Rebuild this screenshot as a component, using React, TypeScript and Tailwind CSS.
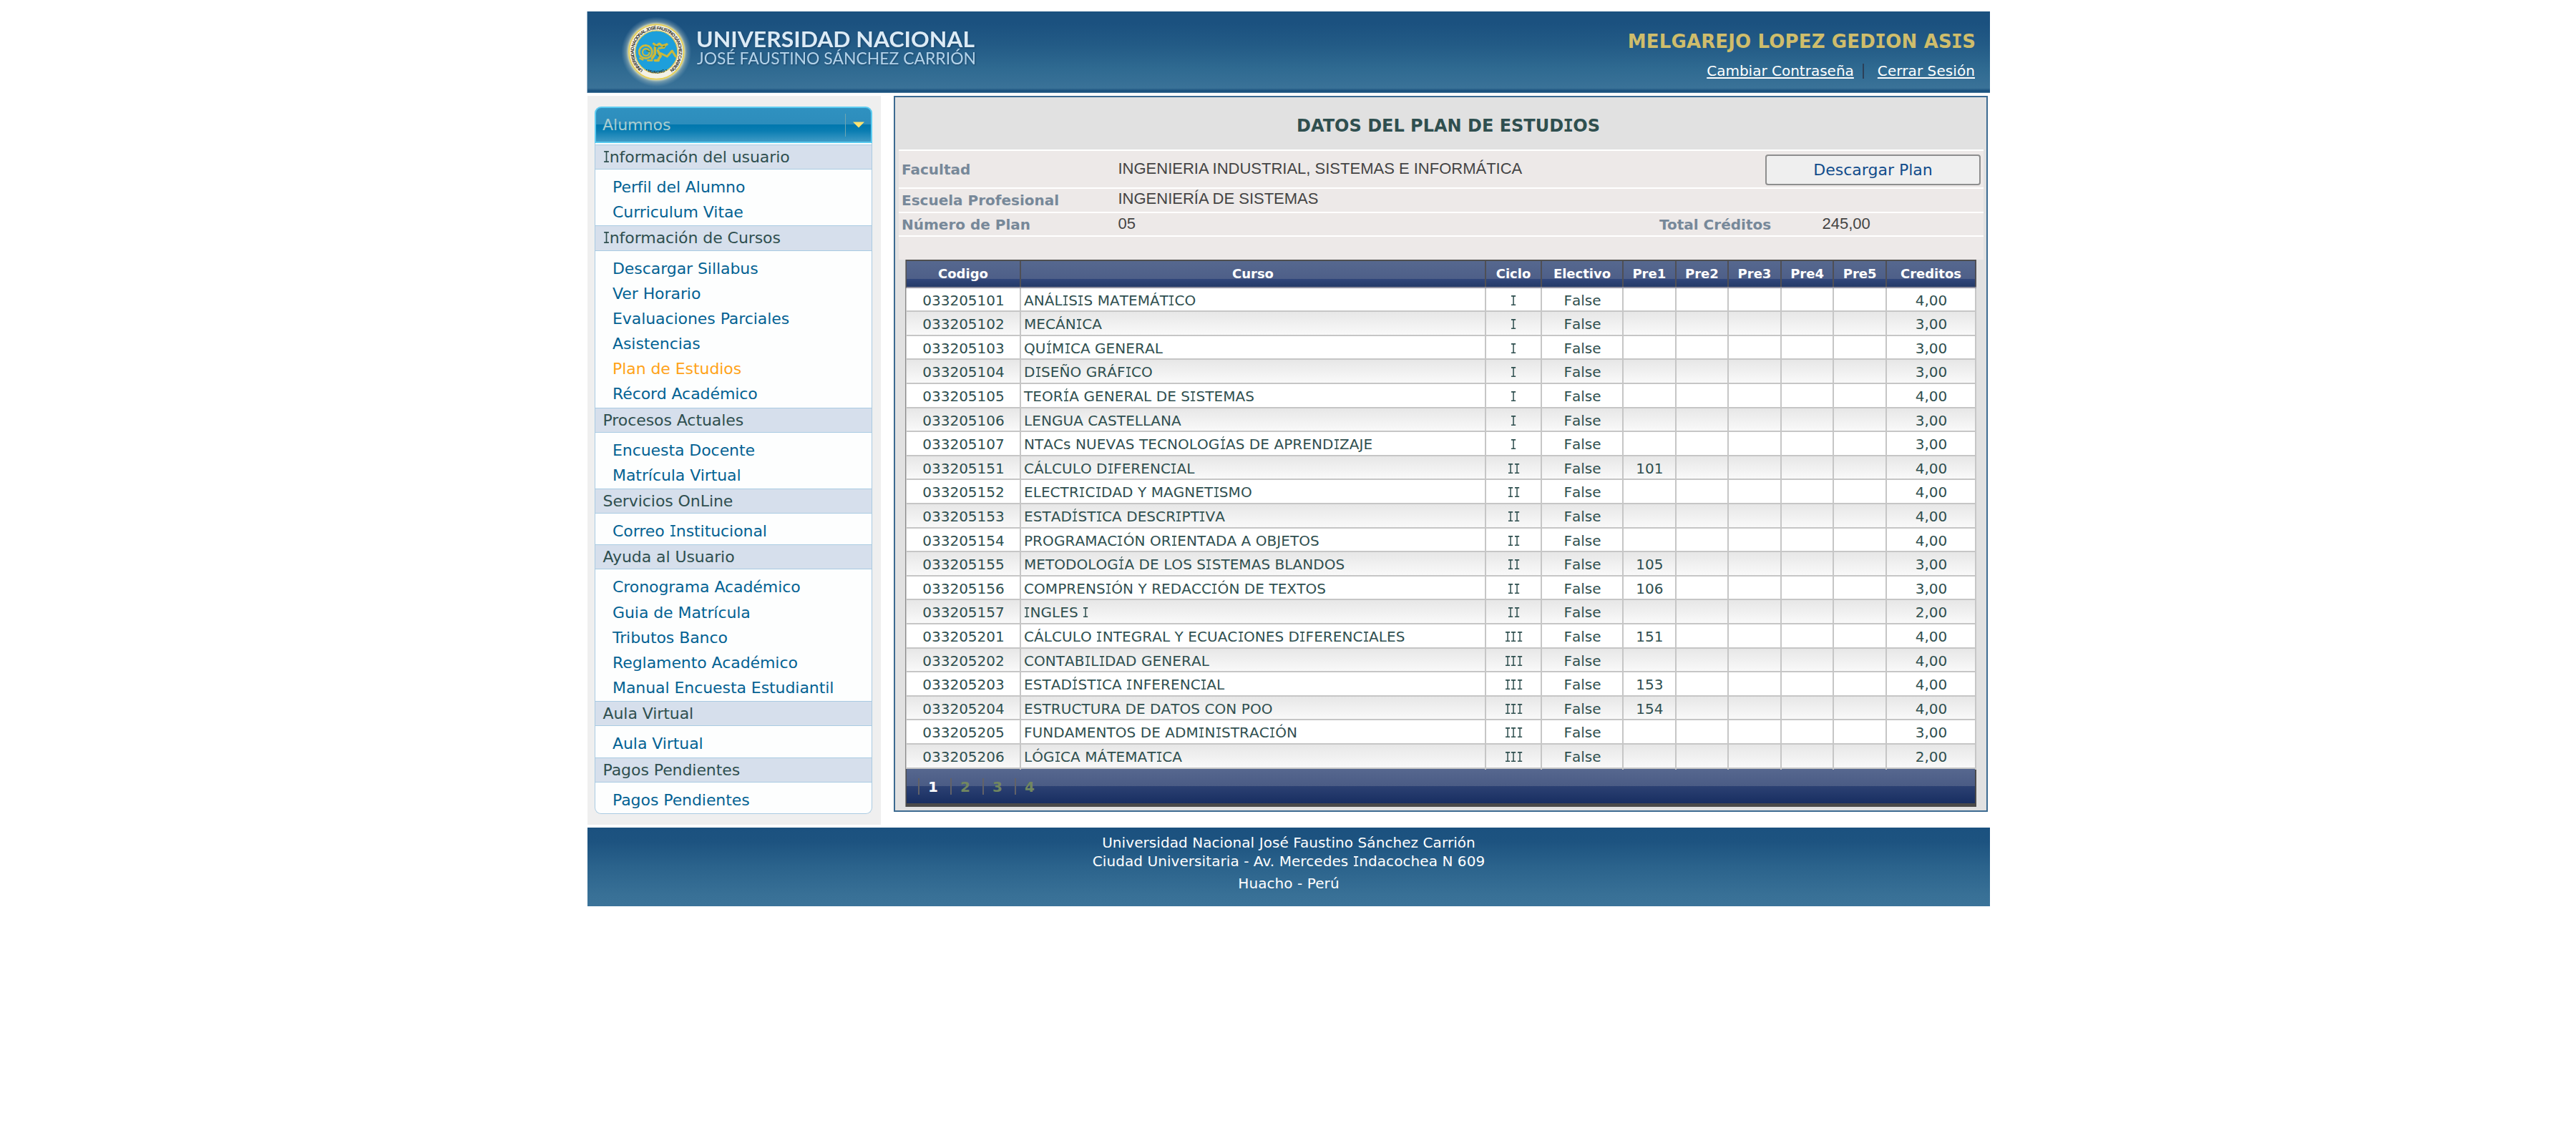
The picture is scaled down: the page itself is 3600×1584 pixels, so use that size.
import React from 'react';

const MENU: { title: string; items: string[] }[] = [
  { title: 'Información del usuario', items: ['Perfil del Alumno', 'Curriculum Vitae'] },
  {
    title: 'Información de Cursos',
    items: ['Descargar Sillabus', 'Ver Horario', 'Evaluaciones Parciales', 'Asistencias', 'Plan de Estudios', 'Récord Académico'],
  },
  { title: 'Procesos Actuales', items: ['Encuesta Docente', 'Matrícula Virtual'] },
  { title: 'Servicios OnLine', items: ['Correo Institucional'] },
  {
    title: 'Ayuda al Usuario',
    items: ['Cronograma Académico', 'Guia de Matrícula', 'Tributos Banco', 'Reglamento Académico', 'Manual Encuesta Estudiantil'],
  },
  { title: 'Aula Virtual', items: ['Aula Virtual'] },
  { title: 'Pagos Pendientes', items: ['Pagos Pendientes'] },
];

const COURSES: [string, string, string, string, string][] = [
  ['033205101', 'ANÁLISIS MATEMÁTICO', 'I', '', '4,00'],
  ['033205102', 'MECÁNICA', 'I', '', '3,00'],
  ['033205103', 'QUÍMICA GENERAL', 'I', '', '3,00'],
  ['033205104', 'DISEÑO GRÁFICO', 'I', '', '3,00'],
  ['033205105', 'TEORÍA GENERAL DE SISTEMAS', 'I', '', '4,00'],
  ['033205106', 'LENGUA CASTELLANA', 'I', '', '3,00'],
  ['033205107', 'NTACs NUEVAS TECNOLOGÍAS DE APRENDIZAJE', 'I', '', '3,00'],
  ['033205151', 'CÁLCULO DIFERENCIAL', 'II', '101', '4,00'],
  ['033205152', 'ELECTRICIDAD Y MAGNETISMO', 'II', '', '4,00'],
  ['033205153', 'ESTADÍSTICA DESCRIPTIVA', 'II', '', '4,00'],
  ['033205154', 'PROGRAMACIÓN ORIENTADA A OBJETOS', 'II', '', '4,00'],
  ['033205155', 'METODOLOGÍA DE LOS SISTEMAS BLANDOS', 'II', '105', '3,00'],
  ['033205156', 'COMPRENSIÓN Y REDACCIÓN DE TEXTOS', 'II', '106', '3,00'],
  ['033205157', 'INGLES I', 'II', '', '2,00'],
  ['033205201', 'CÁLCULO INTEGRAL Y ECUACIONES DIFERENCIALES', 'III', '151', '4,00'],
  ['033205202', 'CONTABILIDAD GENERAL', 'III', '', '4,00'],
  ['033205203', 'ESTADÍSTICA INFERENCIAL', 'III', '153', '4,00'],
  ['033205204', 'ESTRUCTURA DE DATOS CON POO', 'III', '154', '4,00'],
  ['033205205', 'FUNDAMENTOS DE ADMINISTRACIÓN', 'III', '', '3,00'],
  ['033205206', 'LÓGICA MÁTEMATICA', 'III', '', '2,00'],
];

const HEADS = ['Codigo', 'Curso', 'Ciclo', 'Electivo', 'Pre1', 'Pre2', 'Pre3', 'Pre4', 'Pre5', 'Creditos'];
const COLS = 'grid grid-cols-[160px_650px_78px_114px_73.6px_73.6px_73.6px_73.6px_73.6px_125px]';

/* Text with a slab-serif capital I, as in Verdana. */
function T({ children, bold }: { children: string; bold?: boolean }) {
  return (
    <span className="whitespace-pre">
      {children.split(/([IÍ])/).map((part, i) =>
        part === 'I' || part === 'Í' ? (
          <span
            key={i}
            className={
              bold
                ? "mx-[-0.028em] font-['DejaVu_Sans_Mono',monospace]"
                : "mx-[-0.09em] inline-block scale-x-[0.76] font-['DejaVu_Sans_Mono',monospace]"
            }
          >
            {part}
          </span>
        ) : (
          part
        ),
      )}
    </span>
  );
}

function Emblem() {
  return (
    <svg className="block h-[114px] w-[114px] shrink-0" viewBox="0 0 114 114">
      <defs>
        <radialGradient id="halo">
          <stop offset="0.78" stopColor="#fff3b0" stopOpacity="0.95" />
          <stop offset="0.86" stopColor="#c9d6cc" stopOpacity="0.4" />
          <stop offset="1" stopColor="#8fb4cc" stopOpacity="0" />
        </radialGradient>
        <path id="arcTop" d="M40 83.5 A31.4 31.4 0 1 1 74 83.5" />
        <path id="arcBottom" d="M38 81.5 A34.8 34.8 0 0 0 76 81.5" />
      </defs>
      <g transform="translate(0.3 -0.5)">
        <circle cx="57" cy="57" r="49" fill="url(#halo)" />
        <circle cx="57" cy="57" r="38.2" fill="#f3f1e6" stroke="#e6cf55" strokeWidth="1.8" />
        <circle cx="57" cy="57" r="29.6" fill="#1e9fdb" stroke="#dcc95a" strokeWidth="1.4" />
        <text fontFamily="Liberation Sans, sans-serif" fontWeight="700" fontSize="6.4" fill="#33332e">
          <textPath href="#arcTop" textLength="157" startOffset="2">
            UNIVERSIDAD NACIONAL JOSÉ FAUSTINO SÁNCHEZ CARRIÓN
          </textPath>
        </text>
        <text fontFamily="Liberation Sans, sans-serif" fontWeight="700" fontSize="5.6" fill="#33332e">
          <textPath href="#arcBottom" startOffset="50%" textAnchor="middle">
            • HUACHO •
          </textPath>
        </text>
        <g fill="none" stroke="#cdb93a" strokeLinecap="round" strokeLinejoin="round">
          <circle cx="42" cy="57" r="9" strokeWidth="2.8" strokeDasharray="2.4 1.7" />
          <circle cx="42.5" cy="57.5" r="4.8" strokeWidth="2.2" />
          <path d="M34 66 l4 2 M45 69 l6 0" strokeWidth="2.4" />
          <path d="M53 45.5 l4 3 l4 -3 l4 3 l7 -2" strokeWidth="3" />
          <path d="M71 46 l-3 5 l-8 1" strokeWidth="2.4" />
          <path d="M55 51 v9 l-4 6 M59 55 l4 8 l-3 4 M55 69 h5" strokeWidth="3.4" />
          <path d="M63 59 l9 4.5 l7 -8 l5 8" strokeWidth="3" />
        </g>
        <path d="M43 55 l5 2 M55 49 l4 1 M57 60 l3 3 M66 50 l3 -1" stroke="#57803f" strokeWidth="1.4" fill="none" />
      </g>
    </svg>
  );
}

function Header() {
  return (
    <header className="flex h-[114px] justify-between border-l border-[#9fb8cc] bg-[linear-gradient(to_bottom,#1b517f_0%,#1b517f_14%,#235b86_42%,#2f6a91_70%,#3a7298_94%,#1b527e_97%,#1b527e_99%,#7fa0b9_100%)]">
      <div className="flex pl-[39px]">
        <Emblem />
        <svg className="block h-[114px] w-[400px] drop-shadow-[1.5px_1.5px_1px_rgba(15,45,75,0.55)]" viewBox="0 0 400 114">
          <g fontFamily="Lato, sans-serif">
            <text x="-1" y="49.5" fontSize="30.5" fontWeight="700" fill="#dcebf6" textLength="389" lengthAdjust="spacingAndGlyphs">UNIVERSIDAD NACIONAL</text>
            <text x="0" y="74" fontSize="23.5" fill="#b4d3ea" textLength="390" lengthAdjust="spacingAndGlyphs">JOSÉ FAUSTINO SÁNCHEZ CARRIÓN</text>
          </g>
        </svg>
      </div>
      <div className="flex flex-col items-end pt-[27px] pr-[20px]">
        <div className="text-[26px] leading-[30px] font-bold tracking-[0.14px] text-[#cfbd6b]">
          <T bold>MELGAREJO LOPEZ GEDION ASIS</T>
        </div>
        <div className="mt-[12px] flex items-center pr-px text-[20px] leading-[28px] text-white">
          <a className="underline decoration-2 underline-offset-2">Cambiar Contraseña</a>
          <span className="mr-[19px] ml-[12px] h-[21px] w-[2px] bg-[#2c4058]" />
          <a className="tracking-[0.08px] underline decoration-2 underline-offset-2">Cerrar Sesión</a>
        </div>
      </div>
    </header>
  );
}

function Sidebar() {
  return (
    <aside className="h-[1019px] w-[410px] bg-[#efefef] pt-[15px] pl-[10px] text-[22px] tracking-[-0.07px]">
      <div className="flex h-[51px] w-[388px] items-center justify-between rounded-t-[9px] border-2 border-[#5ccbf0] bg-[linear-gradient(to_bottom,#2f91c0_0%,#2d8dbc_49%,#0077ae_50%,#0a7db2_68%,#3f9ac5_100%)] pl-[9px]">
        <span className="leading-[40px] tracking-normal text-[#a9cdd0]">Alumnos</span>
        <span className="flex h-[32px] w-[36px] items-center border-l border-[#6fa6b0] pl-[10px]">
          <svg className="h-[9px] w-[16px]" viewBox="0 0 16 9">
            <path d="M0 0.5 H16 L8 8.5 Z" fill="#ffe470" />
          </svg>
        </span>
      </div>
      <div className="w-[388px] overflow-hidden rounded-b-[9px] border border-t-0 border-[#a9cbe2] bg-[#fdfefe] pt-[2px]">
        {MENU.map((g) => (
          <div key={g.title}>
            <div className="h-[35.15px] border-y border-[#a9cbe2] bg-[#d6dfec] pl-[10.5px] leading-[33px] text-[#2f4f4f]">
              <T>{g.title}</T>
            </div>
            <div className="pt-[7px] pb-[1.05px]">
              {g.items.map((it) => (
                <div
                  key={it}
                  className={
                    it === 'Plan de Estudios'
                      ? 'h-[35.15px] pl-[24px] leading-[35px] text-[#ffa319]'
                      : 'h-[35.15px] pl-[24px] leading-[35px] text-[#036293]'
                  }
                >
                  <T>{it}</T>
                </div>
              ))}
            </div>
          </div>
        ))}
      </div>
    </aside>
  );
}

function PlanInfo() {
  const label = 'pl-[4px] text-[20px] font-bold text-[#778899]';
  const value = "pl-[4.5px] text-[22px] text-[#444444] font-['Liberation_Sans',Arial,sans-serif]";
  const row = 'grid grid-cols-[302px_757px_227px_230px] border-t-2 border-white';
  return (
    <div className="ml-[5px] h-[154px] w-[1516px] bg-[#ede9e8]">
      <div className={`${row} h-[53px]`}>
        <div className={`${label} leading-[53px]`}>Facultad</div>
        <div className={`${value} leading-[49px]`}>INGENIERIA INDUSTRIAL, SISTEMAS E INFORMÁTICA</div>
        <div className="col-span-2 flex items-start justify-end pt-[5px] pr-[4px]">
          <button className="h-[43px] w-[301px] rounded-[4px] border-2 border-[#767676]/80 bg-[#efefef] text-[22px] leading-[39px] text-[#114c8b]">
            Descargar Plan
          </button>
        </div>
      </div>
      <div className={`${row} h-[34px]`}>
        <div className={`${label} leading-[32px]`}>Escuela Profesional</div>
        <div className={`${value} leading-[28px]`}>INGENIERÍA DE SISTEMAS</div>
      </div>
      <div className={`${row} h-[33px]`}>
        <div className={`${label} leading-[32px]`}>Número de Plan</div>
        <div className={`${value} leading-[29px]`}>05</div>
        <div className={`${label} leading-[32px]`}>Total Créditos</div>
        <div className={`${value} leading-[29px]`}>245,00</div>
      </div>
      <div className="h-[34px] border-t-2 border-white" />
    </div>
  );
}

function CourseTable() {
  return (
    <div className="ml-[14px] w-[1497px] border-l border-[#8b8b8b] text-[20px] text-[#2f4f4f] [font-kerning:none]">
      <div className={`${COLS} h-[39.5px] border-t-2 border-b-2 border-l border-[#4f4f4f] border-b-[#9394a3] bg-[linear-gradient(to_bottom,#56688f_0%,#4e5f88_68%,#30467a_70%,#243a68_100%)] text-[18px] font-bold text-white`}>
        {HEADS.map((h) => (
          <div key={h} className="border-r-2 border-[#4f4f55] text-center leading-[36px]">
            {h}
          </div>
        ))}
      </div>
      {COURSES.map(([code, name, cycle, pre, credits], i) => {
        const cell = 'border-r-2 border-[#c6c6c6] pl-px text-center';
        return (
          <div
            key={code}
            className={
              i % 2
                ? `${COLS} h-[33.62px] border-b-2 border-l border-[#c6c6c6] bg-linear-to-b from-[#e7e7e7] to-[#f9f9f9] leading-[34.5px]`
                : `${COLS} h-[33.62px] border-b-2 border-l border-[#c6c6c6] bg-white leading-[34.5px]`
            }
          >
            <div className={cell}>{code}</div>
            <div className="border-r-2 border-[#c6c6c6] pl-[4px] tracking-[0.06px]">
              <T>{name}</T>
            </div>
            <div className={cell}>
              <T>{cycle}</T>
            </div>
            <div className={cell}>False</div>
            <div className={cell}>{pre}</div>
            <div className={cell} />
            <div className={cell} />
            <div className={cell} />
            <div className={cell} />
            <div className={cell}>{credits}</div>
          </div>
        );
      })}
      <div className="flex h-[53px] border-r-2 border-b-[5px] border-l border-[#4a4a4a] bg-[linear-gradient(to_bottom,#56678f_0%,#4b5c85_49%,#2c4173_50%,#182e61_100%)] pt-[13px] pl-[16px] text-[20px] font-bold">
        {['1', '2', '3', '4'].map((p) => (
          <div
            key={p}
            className={
              p === '1'
                ? 'h-[23px] w-[45px] border-l-2 border-[#626268] pl-[12px] leading-[24px] text-white'
                : 'h-[23px] w-[45px] border-l-2 border-[#626268] pl-[12px] leading-[24px] text-[#72875f]'
            }
          >
            {p}
          </div>
        ))}
      </div>
    </div>
  );
}

export default function App() {
  return (
    <div className="min-h-[1584px] w-[3600px] bg-white pt-[16px] font-['DejaVu_Sans',Verdana,sans-serif]">
      <div className="ml-[820px] w-[1961px]">
        <Header />
        <div className="ml-px flex gap-[18px] pt-[4px]">
          <Sidebar />
          <main className="h-[1001px] w-[1529px] border-2 border-[#3c6a91] bg-[#e1e1e1]">
            <h1 className="h-[73px] pt-[4px] pl-[21px] text-center text-[24px] leading-[73px] font-bold text-[#2f4f4f]">
              <T bold>DATOS DEL PLAN DE ESTUDIOS</T>
            </h1>
            <PlanInfo />
            <CourseTable />
          </main>
        </div>
        <footer className="mt-[4px] ml-px h-[110px] bg-[linear-gradient(to_bottom,#1b517f_0%,#1d5380_18%,#2b638c_50%,#387096_85%,#3b7399_100%)] pt-[9px] text-center text-[20px] leading-[25.5px] tracking-[0.07px] text-white">
          <p>Universidad Nacional José Faustino Sánchez Carrión</p>
          <p>
            <T>Ciudad Universitaria - Av. Mercedes Indacochea N 609</T>
          </p>
          <p className="mt-[6px]">Huacho - Perú</p>
        </footer>
      </div>
    </div>
  );
}
